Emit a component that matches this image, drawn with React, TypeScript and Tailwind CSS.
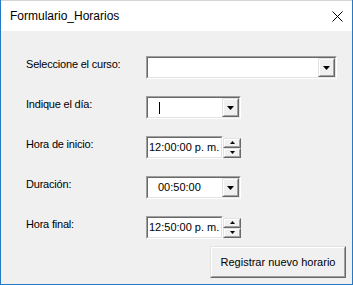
import React from "react";

const font = { fontFamily: '"Liberation Sans", Arial, sans-serif' };

function Sunken({ className, children }: { className?: string; children?: React.ReactNode }) {
  return (
    <div className={`border border-t-[#a0a0a0] border-l-[#a0a0a0] border-b-white border-r-white ${className ?? ""}`}>
      <div className="h-full border border-t-[#696969] border-l-[#696969] border-b-[#e3e3e3] border-r-[#e3e3e3] bg-white flex items-center">
        {children}
      </div>
    </div>
  );
}

function Raised({ className, children }: { className?: string; children?: React.ReactNode }) {
  return (
    <div className={`border border-t-[#e3e3e3] border-l-[#e3e3e3] border-b-[#696969] border-r-[#696969] ${className ?? ""}`}>
      <div className="h-full border border-t-white border-l-white border-b-[#a0a0a0] border-r-[#a0a0a0] bg-[#f0f0f0] flex items-center justify-center">
        {children}
      </div>
    </div>
  );
}

function Arrow({ up = false, size = 7 }: { up?: boolean; size?: number }) {
  const h = Math.ceil(size / 2);
  return (
    <svg width={size} height={h} viewBox={`0 0 ${size} ${h}`}>
      <polygon
        points={up ? `0,${h} ${size},${h} ${size / 2},0` : `0,0 ${size},0 ${size / 2},${h}`}
        fill="#000"
      />
    </svg>
  );
}

function Combo({ width, value, caret }: { width: string; value?: string; caret?: boolean }) {
  return (
    <Sunken className={`${width} h-[23px]`}>
      <div className="flex-1 pl-[10px] text-[11px] text-black leading-none flex items-center">
        {caret && <span className="inline-block w-px h-[12px] bg-black ml-[1px]" />}
        {value}
      </div>
      <Raised className="w-[17px] h-full">
        <Arrow />
      </Raised>
    </Sunken>
  );
}

function Spin({ value }: { value: string }) {
  return (
    <div className="flex items-center h-[23px]">
      <Sunken className="w-[77px] h-[23px]">
        <span className="pl-px text-[11px] text-black whitespace-nowrap">{value}</span>
      </Sunken>
      <div className="flex flex-col w-[18px]">
        <Raised className="h-[10px]">
          <Arrow up size={5} />
        </Raised>
        <Raised className="h-[10px]">
          <Arrow size={5} />
        </Raised>
      </div>
    </div>
  );
}

function Row({ label, children }: { label: string; children: React.ReactNode }) {
  return (
    <div className="flex items-start h-[23px]">
      <div className="w-[120px] pt-[1px] text-[11px] leading-[14px] tracking-[-0.2px] text-black">{label}</div>
      {children}
    </div>
  );
}

export default function App() {
  return (
    <div className="w-[353px] h-[285px] flex flex-col bg-[#f0f0f0] border-x border-b border-[#2679c4]" style={font}>
      <div className="h-px bg-[#d4d4d4]" />
      <div className="h-[30px] bg-white flex items-center justify-between pl-[9px] pr-[9px]">
        <span className="text-[12px] text-black">Formulario_Horarios</span>
        <svg width="11" height="11" viewBox="0 0 11 11">
          <path d="M0.5 0.5 L10.5 10.5 M10.5 0.5 L0.5 10.5" stroke="#000" strokeWidth="1" />
        </svg>
      </div>
      <div className="flex-1 flex flex-col pt-[25px] pl-[25px] pr-[6px]">
        <div className="flex flex-col gap-[17px]">
          <Row label="Seleccione el curso:">
            <Combo width="w-[191px]" />
          </Row>
          <Row label="Indique el día:">
            <Combo width="w-[95px]" caret />
          </Row>
          <Row label="Hora de inicio:">
            <Spin value="12:00:00 p. m." />
          </Row>
          <Row label="Duración:">
            <Combo width="w-[95px]" value="00:50:00" />
          </Row>
          <Row label="Hora final:">
            <Spin value="12:50:00 p. m." />
          </Row>
        </div>
        <div className="flex justify-end mt-[7px]">
          <Raised className="w-[136px] h-[32px]">
            <span className="text-[11px] text-black">Registrar nuevo horario</span>
          </Raised>
        </div>
      </div>
    </div>
  );
}
